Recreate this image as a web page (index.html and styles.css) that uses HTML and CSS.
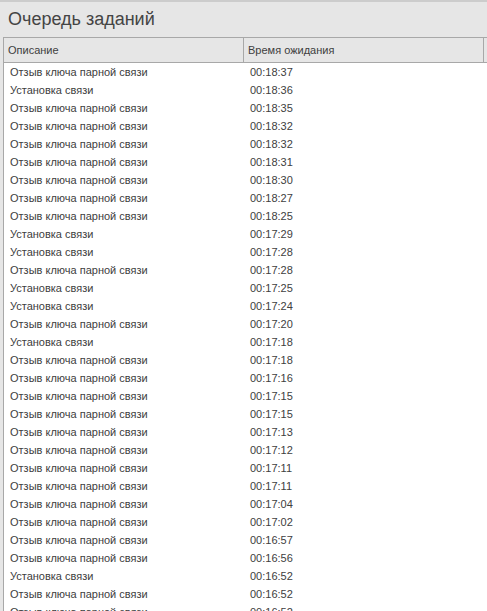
FILE: index.html
```html
<!DOCTYPE html>
<html lang="ru">
<head>
<meta charset="utf-8">
<link rel="stylesheet" href="styles.css">
</head>
<body>
<div class="topbar"></div>
<div class="titlebar"><h1 class="title">Очередь заданий</h1></div>
<div class="grid">
  <div class="head">
    <div class="hcell c1">Описание</div>
    <div class="hcell c2">Время ожидания</div>
    <div class="hcell c3"></div>
  </div>
  <div class="rows">
    <div class="row"><span>Отзыв ключа парной связи</span><span>00:18:37</span></div>
    <div class="row"><span>Установка связи</span><span>00:18:36</span></div>
    <div class="row"><span>Отзыв ключа парной связи</span><span>00:18:35</span></div>
    <div class="row"><span>Отзыв ключа парной связи</span><span>00:18:32</span></div>
    <div class="row"><span>Отзыв ключа парной связи</span><span>00:18:32</span></div>
    <div class="row"><span>Отзыв ключа парной связи</span><span>00:18:31</span></div>
    <div class="row"><span>Отзыв ключа парной связи</span><span>00:18:30</span></div>
    <div class="row"><span>Отзыв ключа парной связи</span><span>00:18:27</span></div>
    <div class="row"><span>Отзыв ключа парной связи</span><span>00:18:25</span></div>
    <div class="row"><span>Установка связи</span><span>00:17:29</span></div>
    <div class="row"><span>Установка связи</span><span>00:17:28</span></div>
    <div class="row"><span>Отзыв ключа парной связи</span><span>00:17:28</span></div>
    <div class="row"><span>Установка связи</span><span>00:17:25</span></div>
    <div class="row"><span>Установка связи</span><span>00:17:24</span></div>
    <div class="row"><span>Отзыв ключа парной связи</span><span>00:17:20</span></div>
    <div class="row"><span>Установка связи</span><span>00:17:18</span></div>
    <div class="row"><span>Отзыв ключа парной связи</span><span>00:17:18</span></div>
    <div class="row"><span>Отзыв ключа парной связи</span><span>00:17:16</span></div>
    <div class="row"><span>Отзыв ключа парной связи</span><span>00:17:15</span></div>
    <div class="row"><span>Отзыв ключа парной связи</span><span>00:17:15</span></div>
    <div class="row"><span>Отзыв ключа парной связи</span><span>00:17:13</span></div>
    <div class="row"><span>Отзыв ключа парной связи</span><span>00:17:12</span></div>
    <div class="row"><span>Отзыв ключа парной связи</span><span>00:17:11</span></div>
    <div class="row"><span>Отзыв ключа парной связи</span><span>00:17:11</span></div>
    <div class="row"><span>Отзыв ключа парной связи</span><span>00:17:04</span></div>
    <div class="row"><span>Отзыв ключа парной связи</span><span>00:17:02</span></div>
    <div class="row"><span>Отзыв ключа парной связи</span><span>00:16:57</span></div>
    <div class="row"><span>Отзыв ключа парной связи</span><span>00:16:56</span></div>
    <div class="row"><span>Установка связи</span><span>00:16:52</span></div>
    <div class="row"><span>Отзыв ключа парной связи</span><span>00:16:52</span></div>
    <div class="row"><span>Отзыв ключа парной связи</span><span>00:16:52</span></div>
  </div>
</div>
</body>
</html>
```
FILE: styles.css
```css
html, body {
  margin: 0;
  padding: 0;
  background: #e6e6e6;
  overflow: hidden;
  height: 611px;
}
body {
  font-family: "Liberation Sans", Arial, sans-serif;
  color: #404040;
}
.topbar {
  height: 2px;
  background: #cccccc;
}
.titlebar {
  height: 35px;
  display: flex;
  align-items: center;
  padding-left: 8px;
}
.title {
  margin: 0;
  font-weight: normal;
  font-size: 18px;
  color: #444;
}
.grid {
  margin-left: 3px;
  border-left: 1px solid #a8a8a8;
  border-top: 1px solid #a8a8a8;
  background: #fff;
  height: 600px;
}
.head {
  display: grid;
  grid-template-columns: 239px 240px 1fr;
  height: 24px;
  border-bottom: 1px solid #a8a8a8;
  background: #e6e6e6;
}
.hcell {
  display: flex;
  align-items: center;
  font-size: 11px;
  color: #404040;
}
.c1 { padding-left: 4px; }
.c2 { padding-left: 4px; border-left: 1px solid #a8a8a8; }
.c3 { border-left: 1px solid #a8a8a8; }
.rows { background: #fff; }
.row {
  display: grid;
  grid-template-columns: 240px 1fr;
  height: 18px;
  align-items: center;
  font-size: 11px;
  color: #404040;
}
.row span:first-child { padding-left: 6px; }
.row span:last-child { padding-left: 6px; }
```
